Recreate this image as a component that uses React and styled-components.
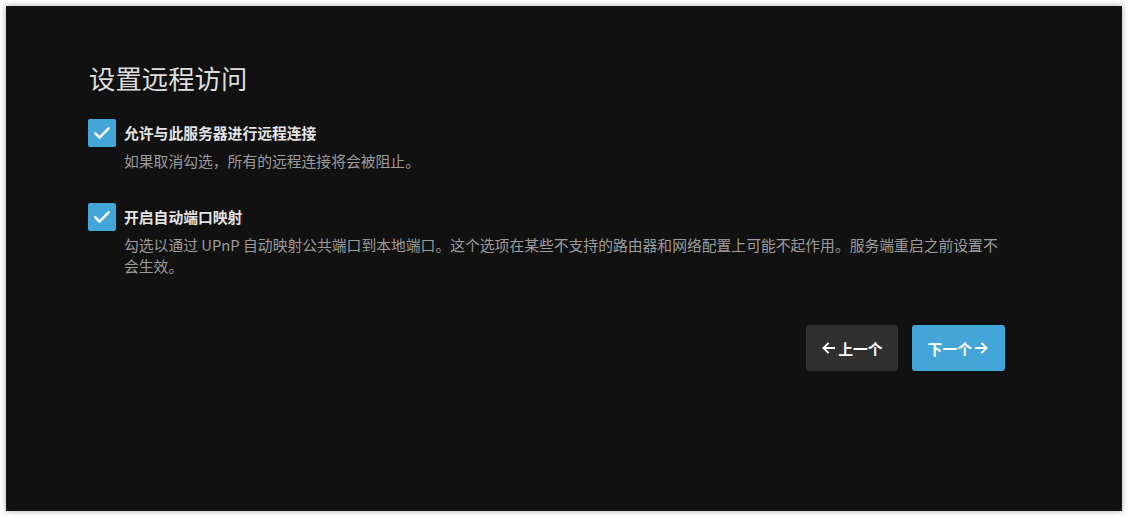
import React, { useState } from "react";
import styled, { createGlobalStyle } from "styled-components";

const GlobalStyle = createGlobalStyle`
    html, body {
        margin: 0;
        padding: 0;
        background: #fff;
    }
    body {
        font-family: "Noto Sans CJK SC", "Noto Sans", sans-serif;
    }
`;

const Page = styled.div`
    padding: 6px 7px 6px 6px;
`;

const Panel = styled.div`
    height: 505px;
    background-color: #111111;
    box-shadow: 0 0 6px rgba(0, 0, 0, 0.35);
    padding: 56px 0 0 82px;
    box-sizing: border-box;
`;

const Content = styled.div`
    width: 917px;
`;

const Title = styled.h1`
    margin: 0 0 25px 1px;
    font-size: 26.4px;
    font-weight: 400;
    line-height: 32px;
    color: #dddddd;
`;

const Option = styled.div`
    display: grid;
    grid-template-columns: 28px 1fr;
    column-gap: 8px;
    margin-bottom: ${(p) => p.$gap || 0}px;
`;

const Box = styled.button`
    width: 28px;
    height: 28px;
    padding: 0;
    border: none;
    border-radius: 2px;
    background-color: ${(p) => (p.$checked ? "#44a6d8" : "transparent")};
    box-shadow: ${(p) => (p.$checked ? "none" : "inset 0 0 0 2px #888")};
    display: flex;
    align-items: center;
    justify-content: center;
    cursor: pointer;
`;

const Label = styled.div`
    font-size: 14.8px;
    font-weight: 700;
    line-height: 28px;
    color: #e4e4e4;
`;

const Desc = styled.div`
    grid-column: 2;
    margin-top: 3px;
    font-size: 14.8px;
    line-height: 21px;
    color: #9c9c9c;
`;

const Actions = styled.div`
    display: flex;
    justify-content: flex-end;
    gap: 14px;
    margin: 49px 0 0;
`;

const Button = styled.button`
    height: 46px;
    padding: 0 ${(p) => (p.$primary ? 16 : 15)}px;
    border: none;
    border-radius: 3px;
    background-color: ${(p) => (p.$primary ? "#44a6d8" : "#303030")};
    color: #fff;
    font-family: inherit;
    font-size: 14.8px;
    font-weight: 700;
    display: flex;
    align-items: center;
    gap: 2px;
    cursor: pointer;
`;

const Check = () => (
    <svg width="20" height="20" viewBox="0 0 24 24" fill="none" stroke="#fff" strokeWidth="3" strokeLinecap="round" strokeLinejoin="round">
        <path d="M4 12.5l5 5L20 6.5" />
    </svg>
);

const Arrow = ({ left }) => (
    <svg width="15" height="14" viewBox="0 0 15 14" fill="none" stroke="#fff" strokeWidth="1.9" strokeLinecap="square">
        {left ? <path d="M13 7H2.5M7 2.5L2.5 7 7 11.5" /> : <path d="M2 7h10.5M8 2.5L12.5 7 8 11.5" />}
    </svg>
);

const App = () => {
    const [remote, setRemote] = useState(true);
    const [upnp, setUpnp] = useState(true);

    return (
        <Page>
            <GlobalStyle />
            <Panel>
                <Content>
                    <Title>设置远程访问</Title>

                    <Option $gap={32}>
                        <Box $checked={remote} onClick={() => setRemote(!remote)}>
                            {remote && <Check />}
                        </Box>
                        <Label>允许与此服务器进行远程连接</Label>
                        <Desc>如果取消勾选，所有的远程连接将会被阻止。</Desc>
                    </Option>

                    <Option>
                        <Box $checked={upnp} onClick={() => setUpnp(!upnp)}>
                            {upnp && <Check />}
                        </Box>
                        <Label>开启自动端口映射</Label>
                        <Desc>
                            勾选以通过 UPnP 自动映射公共端口到本地端口。这个选项在某些不支持的路由器和网络配置上可能不起作用。服务端重启之前设置不会生效。
                        </Desc>
                    </Option>

                    <Actions>
                        <Button>
                            <Arrow left />
                            上一个
                        </Button>
                        <Button $primary>
                            下一个
                            <Arrow />
                        </Button>
                    </Actions>
                </Content>
            </Panel>
        </Page>
    );
};

export default App;
